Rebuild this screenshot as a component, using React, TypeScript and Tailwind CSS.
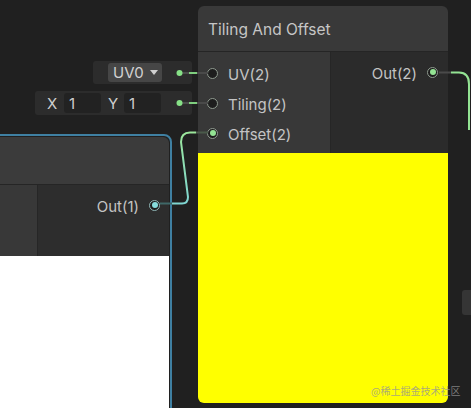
import React from "react";

// 📌 Puerto de un nodo (círculo con anillo)
const Port: React.FC<{ connected?: boolean; color?: string; ring?: string }> = ({
  connected,
  color = "bg-[#93e393]",
  ring = "border-[#8f9a8f]",
}) => (
  <span className={`flex h-[11px] w-[11px] shrink-0 items-center justify-center rounded-full border bg-[#1d1d1d] ${ring}`}>
    {connected && <span className={`h-[6px] w-[6px] rounded-full ${color}`} />}
  </span>
);

const InputRow: React.FC<{ label: string; connected?: boolean }> = ({ label, connected }) => (
  <div className="flex h-[30px] items-center gap-[10px] pl-[9px]">
    <Port connected={connected} />
    <span className="pt-[4px] text-[15px] text-[#c4c4c4]">{label}</span>
  </div>
);

const App: React.FC = () => {
  return (
    <div
      className="relative h-[408px] w-[471px] overflow-hidden bg-[#202020]"
      style={{ fontFamily: "Inter, 'Noto Sans', sans-serif" }}
    >
      {/* 📌 Nodo izquierdo (seleccionado) */}
      <div className="absolute left-[-12px] top-[134px] h-[300px] w-[184px] rounded-[8px] border-2 border-[#3f80a2] p-px">
        <div className="flex h-full flex-col overflow-hidden rounded-[6px]">
          <div className="h-[47px] bg-[#3b3b3b]" />
          <div className="h-px bg-[#252525]" />
          <div className="flex h-[71px]">
            <div className="w-[46px] bg-[#383838]" />
            <div className="w-px bg-[#262626]" />
            <div className="flex flex-1 items-start justify-end bg-[#2d2d2d] pr-[9px] pt-[10px]">
              <div className="flex h-[20px] items-center gap-[10px]">
                <span className="pt-[4px] text-[15px] text-[#c4c4c4]">Out(1)</span>
                <Port connected color="bg-[#86dcdc]" ring="border-[#8fb4b4]" />
              </div>
            </div>
          </div>
          <div className="flex-1 bg-white" />
        </div>
      </div>

      {/* 📌 Nodo Tiling And Offset */}
      <div className="absolute left-[198px] top-[6px] flex h-[397px] w-[250px] flex-col overflow-hidden rounded-[6px]">
        <div className="flex h-[45px] items-center bg-[#393939] px-[10px] pt-[2px] text-[15.5px] text-[#c6c6c6]">
          Tiling And Offset
        </div>
        <div className="h-px bg-[#252525]" />
        <div className="flex h-[101px]">
          <div className="flex w-[132px] flex-col bg-[#383838] pt-[6px]">
            <InputRow label="UV(2)" />
            <InputRow label="Tiling(2)" />
            <InputRow label="Offset(2)" connected />
          </div>
          <div className="w-px bg-[#262626]" />
          <div className="flex flex-1 items-start justify-end bg-[#2b2b2b] pr-[10px] pt-[10px]">
            <div className="flex h-[20px] items-center gap-[10px]">
              <span className="pt-[4px] text-[15px] text-[#c4c4c4]">Out(2)</span>
              <Port connected />
            </div>
          </div>
        </div>
        <div className="flex-1 bg-[#ffff00]" />
      </div>

      {/* 📌 Propiedad UV0 */}
      <div className="absolute left-[93px] top-[61px] flex h-[23px] w-[99px] items-center rounded-[3px] bg-[#2c2c2c] pl-[15px]">
        <div className="flex h-[19px] w-[54px] items-center gap-[6px] rounded-[3px] bg-[#464646] pl-[5px] text-[15px] text-[#d2d2d2]">
          <span className="pt-[2px]">UV0</span>
          <span className="h-0 w-0 border-x-[4px] border-t-[5px] border-x-transparent border-t-[#d0d0d0]" />
        </div>
      </div>

      {/* 📌 Propiedad Tiling X / Y */}
      <div className="absolute left-[35px] top-[91px] flex h-[24px] w-[157px] items-center rounded-[3px] bg-[#2c2c2c] pl-[12px] text-[15px] text-[#cfcfcf]">
        <span className="w-[17px] pt-[2px]">X</span>
        <div className="flex h-[20px] w-[37px] items-center rounded-[3px] bg-[#222222] pl-[5px] pt-[2px]">1</div>
        <span className="w-[23px] pl-[7px] pt-[2px]">Y</span>
        <div className="flex h-[20px] w-[37px] items-center rounded-[3px] bg-[#222222] pl-[5px] pt-[2px]">1</div>
      </div>

      {/* 📌 Nodo parcial a la derecha */}
      <div className="absolute left-[462px] top-[290px] h-[25px] w-[20px] rounded-[3px] bg-[#353535]" />

      {/* 📌 Conexiones */}
      <svg className="pointer-events-none absolute left-0 top-0" width="471" height="408">
        <defs>
          <linearGradient id="wire" x1="0" y1="1" x2="0" y2="0">
            <stop offset="0" stopColor="#7fd6d2" />
            <stop offset="1" stopColor="#9be69b" />
          </linearGradient>
        </defs>
        <line x1="182" y1="73" x2="208" y2="73" stroke="#4a4a4a" strokeWidth="2" />
        <line x1="189" y1="73" x2="197" y2="73" stroke="#7fcf7f" strokeWidth="2" />
        <circle cx="179.5" cy="73" r="3" fill="#86e086" />
        <line x1="182" y1="103" x2="208" y2="103" stroke="#4a4a4a" strokeWidth="2" />
        <line x1="189" y1="103" x2="197" y2="103" stroke="#7fcf7f" strokeWidth="2" />
        <circle cx="179.5" cy="103" r="3" fill="#86e086" />
        <line x1="160" y1="203.5" x2="172" y2="203.5" stroke="#3f6868" strokeWidth="2" />
        <path
          d="M172 203.5 H182 Q188 203.5 188 197 L181 142 Q181 132.5 190 132.5 H196"
          fill="none"
          stroke="url(#wire)"
          strokeWidth="2"
        />
        <line x1="196" y1="132.5" x2="208" y2="132.5" stroke="#4a5a4a" strokeWidth="2" />
        <line x1="439" y1="72.5" x2="451" y2="72.5" stroke="#4a4a4a" strokeWidth="2" />
        <path d="M451 72.5 H459 Q469 72.5 469 84 V130" fill="none" stroke="#93e393" strokeWidth="2" />
      </svg>

      {/* 📌 Marca de agua */}
      <div
        className="absolute left-[371px] top-[383px] whitespace-nowrap text-[10px] text-[#959595]/80"
        style={{ fontFamily: "'Noto Sans CJK SC', sans-serif" }}
      >
        @稀土掘金技术社区
      </div>
    </div>
  );
};

export default App;
